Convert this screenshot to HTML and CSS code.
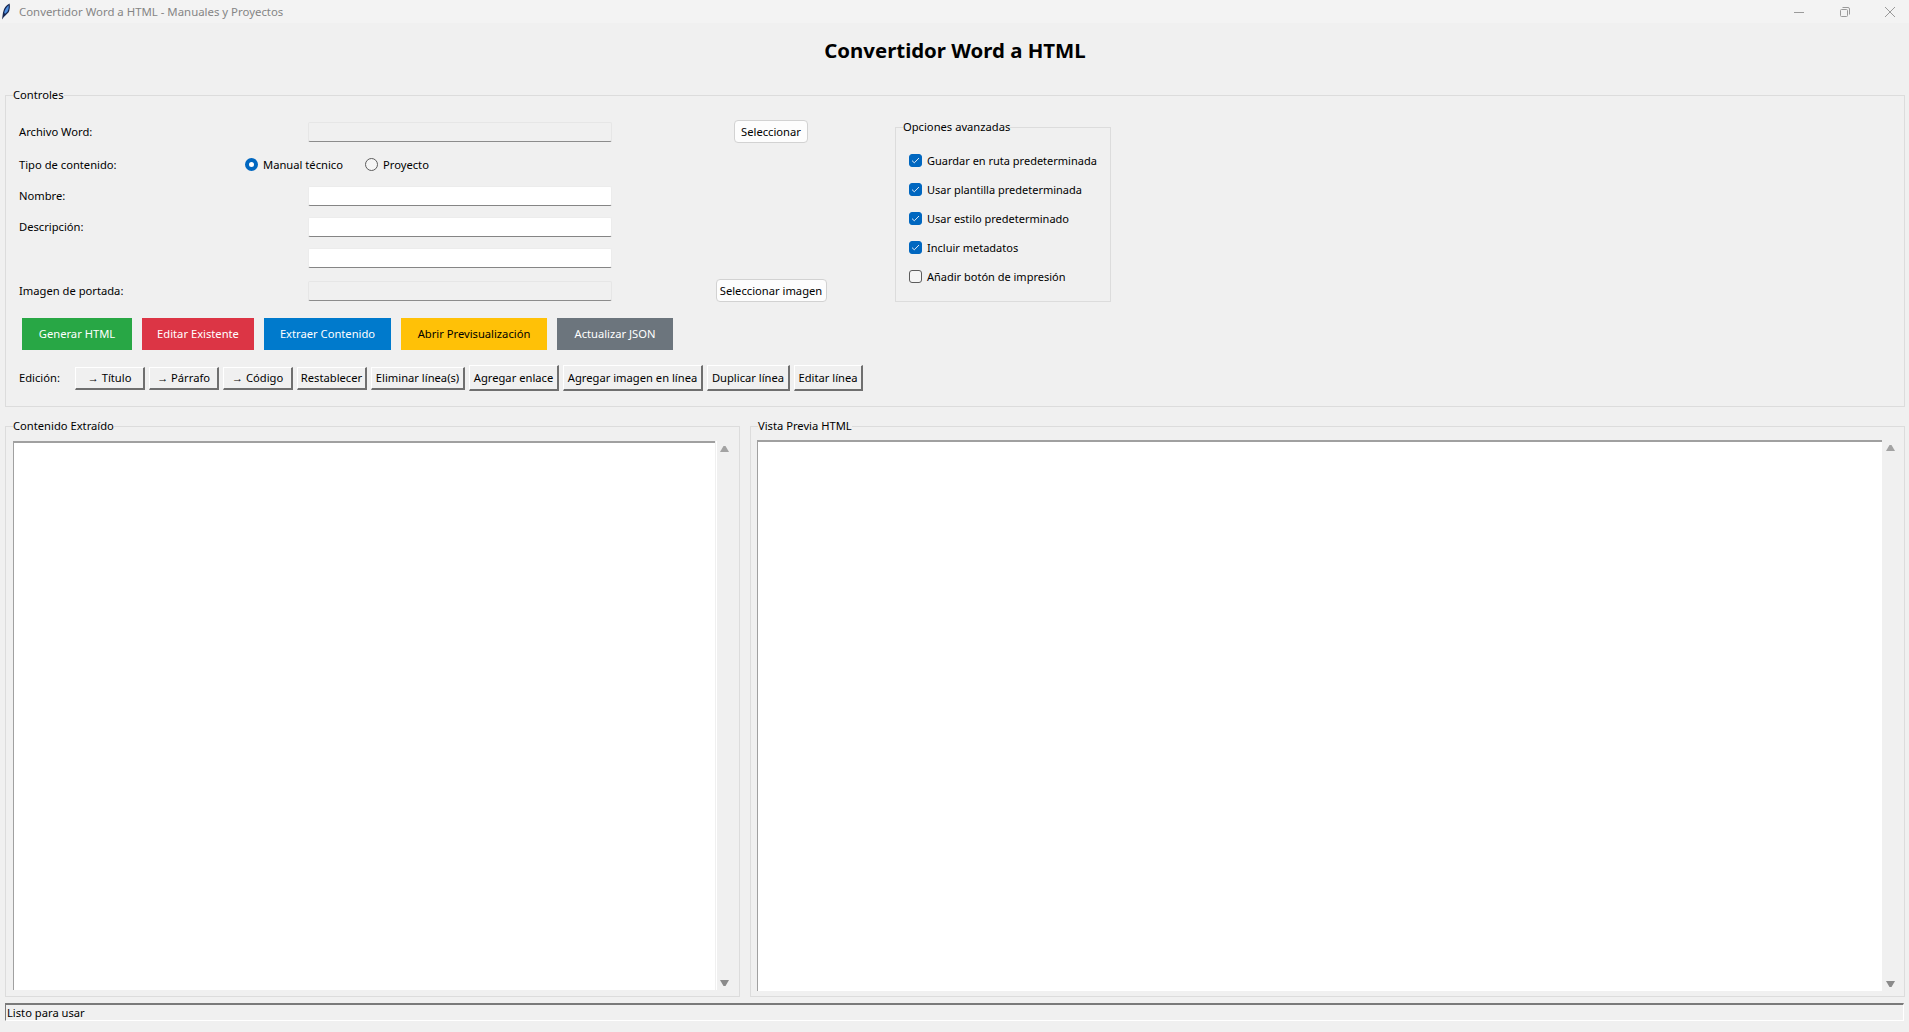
FILE: index.html
```html
<!DOCTYPE html>
<html lang="es">
<head>
<meta charset="utf-8">
<title>Convertidor Word a HTML - Manuales y Proyectos</title>
<link rel="stylesheet" href="styles.css">
</head>
<body>
<header class="titlebar">
  <svg class="feather" width="10" height="17" viewBox="0 0 10 17"><path d="M1 16.5L2 9.5Q3.2 3 8.6 .6Q9.6 6 7.4 9.6L4.4 12.4Q3 13.5 1 16.5Z" fill="#16264f"/><path d="M3.2 10Q4.2 4.6 7.8 2.2Q8 6 6.4 8.8L4.2 10.8Z" fill="#4f8fe0"/></svg>
  <span class="window-title">Convertidor Word a HTML - Manuales y Proyectos</span>
  <div class="window-controls">
    <svg width="10" height="10" viewBox="0 0 10 10"><path d="M0 5.5H10" stroke="#9a9a9a" fill="none"/></svg>
    <svg width="10" height="10" viewBox="0 0 10 10"><path d="M.5 3.5a1 1 0 0 1 1-1h5a1 1 0 0 1 1 1v5a1 1 0 0 1-1 1h-5a1 1 0 0 1-1-1zM2.5 .5h5.5a1.5 1.5 0 0 1 1.5 1.5v5.5" stroke="#9a9a9a" fill="none"/></svg>
    <svg width="10" height="10" viewBox="0 0 10 10"><path d="M0 0L10 10M10 0L0 10" stroke="#9a9a9a" fill="none"/></svg>
  </div>
</header>
<main class="app">
  <h1 class="heading">Convertidor Word a HTML</h1>
  <section class="group controls">
    <span class="legend">Controles</span>
    <div class="top-row">
      <div class="form-grid">
        <label class="field-label">Archivo Word:</label>
        <input class="entry entry-disabled col-entry" type="text" disabled>
        <div class="col-action"><button class="pick-btn pick-short">Seleccionar</button></div>

        <label class="field-label">Tipo de contenido:</label>
        <div class="radio-row">
          <span class="radio-item radio-item-first"><span class="radio radio-on"></span>Manual técnico</span>
          <span class="radio-item"><span class="radio"></span>Proyecto</span>
        </div>

        <label class="field-label">Nombre:</label>
        <input class="entry col-entry" type="text">

        <label class="field-label">Descripción:</label>
        <input class="entry col-entry" type="text">

        <input class="entry col-entry" type="text">

        <label class="field-label">Imagen de portada:</label>
        <input class="entry entry-disabled col-entry" type="text" disabled>
        <div class="col-action"><button class="pick-btn pick-long">Seleccionar imagen</button></div>
      </div>
      <section class="group options">
        <span class="legend">Opciones avanzadas</span>
        <div class="check-row"><span class="check check-on"><svg width="9" height="7" viewBox="0 0 9 7"><path d="M1 3.6L3.3 5.8L8 1" stroke="#dfeaf6" fill="none"/></svg></span>Guardar en ruta predeterminada</div>
        <div class="check-row"><span class="check check-on"><svg width="9" height="7" viewBox="0 0 9 7"><path d="M1 3.6L3.3 5.8L8 1" stroke="#dfeaf6" fill="none"/></svg></span>Usar plantilla predeterminada</div>
        <div class="check-row"><span class="check check-on"><svg width="9" height="7" viewBox="0 0 9 7"><path d="M1 3.6L3.3 5.8L8 1" stroke="#dfeaf6" fill="none"/></svg></span>Usar estilo predeterminado</div>
        <div class="check-row"><span class="check check-on"><svg width="9" height="7" viewBox="0 0 9 7"><path d="M1 3.6L3.3 5.8L8 1" stroke="#dfeaf6" fill="none"/></svg></span>Incluir metadatos</div>
        <div class="check-row"><span class="check"></span>Añadir botón de impresión</div>
      </section>
    </div>
    <div class="action-row">
      <button class="action action-green">Generar HTML</button>
      <button class="action action-red">Editar Existente</button>
      <button class="action action-blue">Extraer Contenido</button>
      <button class="action action-yellow">Abrir Previsualización</button>
      <button class="action action-gray">Actualizar JSON</button>
    </div>
    <div class="edit-row">
      <span class="edit-label">Edición:</span>
      <button class="tool tool-70">→ Título</button>
      <button class="tool tool-70">→ Párrafo</button>
      <button class="tool tool-70">→ Código</button>
      <button class="tool tool-70">Restablecer</button>
      <button class="tool tool-94">Eliminar línea(s)</button>
      <button class="tool tool-tall tool-90">Agregar enlace</button>
      <button class="tool tool-tall tool-140">Agregar imagen en línea</button>
      <button class="tool tool-tall tool-83">Duplicar línea</button>
      <button class="tool tool-tall tool-69">Editar línea</button>
    </div>
  </section>
  <div class="panes">
    <section class="group pane pane-left">
      <span class="legend">Contenido Extraído</span>
      <textarea class="text-box"></textarea>
      <div class="scroll-rail">
        <svg width="9" height="6" viewBox="0 0 9 6"><path d="M3.5 0h2L9 6H0Z" fill="#a3a3a3"/></svg>
        <svg width="9" height="6" viewBox="0 0 9 6"><path d="M0 0H9L5.5 6h-2Z" fill="#8a8a8a"/></svg>
      </div>
    </section>
    <section class="group pane pane-right">
      <span class="legend">Vista Previa HTML</span>
      <textarea class="text-box"></textarea>
      <div class="scroll-rail">
        <svg width="9" height="6" viewBox="0 0 9 6"><path d="M3.5 0h2L9 6H0Z" fill="#a3a3a3"/></svg>
        <svg width="9" height="6" viewBox="0 0 9 6"><path d="M0 0H9L5.5 6h-2Z" fill="#8a8a8a"/></svg>
      </div>
    </section>
  </div>
  <footer class="status">Listo para usar</footer>
</main>
</body>
</html>
```

FILE: styles.css
```css
* { box-sizing: border-box; }

html, body { height: 100%; }

body {
  margin: 0;
  display: flex;
  flex-direction: column;
  overflow: hidden;
  background: #f0f0f0;
  color: #000;
  font-family: "Noto Sans", "Open Sans", sans-serif;
  font-size: 11.2px;
}

/* Window title bar */
.titlebar {
  flex: none;
  height: 23px;
  display: flex;
  align-items: center;
  padding-left: 1px;
  background: #f3f3f3;
}
.feather { flex: none; margin-right: 8px; }
.window-title { color: #858585; font-size: 11.4px; }
.window-controls {
  margin-left: auto;
  display: flex;
  gap: 35.5px;
  padding-right: 14px;
}

/* Main */
.app {
  flex: 1;
  min-height: 0;
  display: flex;
  flex-direction: column;
  padding: 0 4px 11px 5px;
}
.heading {
  flex: none;
  height: 72px;
  margin: 0;
  padding-top: 13px;
  text-align: center;
  font-size: 20.4px;
  line-height: 28px;
  font-weight: 700;
}

.group {
  position: relative;
  border: 1px solid #dcdcdc;
}
.legend {
  position: absolute;
  left: 7px;
  top: -10px;
  line-height: 17px;
  background: #f0f0f0;
  white-space: nowrap;
}

/* Controls */
.controls {
  flex: none;
  height: 312px;
  padding: 26px 0 0 13px;
}
.top-row { display: flex; align-items: flex-start; }
.form-grid {
  width: 876px;
  display: grid;
  grid-template-columns: 226px 63px 304px 283px;
  grid-template-rows: 33px 31px 31px 31px 33px 20px;
  align-items: start;
}
.field-label {
  grid-column: 1;
  height: 20px;
  line-height: 20px;
}
.col-entry { grid-column: 3; }
.col-action {
  grid-column: 4;
  height: 19px;
  padding-left: 35px;
  display: flex;
  justify-content: center;
  align-items: center;
}
.entry {
  width: 304px;
  height: 20px;
  padding: 0 3px;
  background: #fff;
  border: 1px solid #ececec;
  border-bottom: 1px solid #858585;
  border-radius: 2px;
  outline: none;
}
.entry-disabled {
  background: #f0f0f0;
  border-color: #e6e6e6;
  border-bottom-color: #8c8c8c;
}
.pick-btn {
  flex: none;
  height: 23px;
  padding: 0;
  background: #fdfdfd;
  border: 1px solid #d2d2d2;
  border-radius: 4px;
  font: inherit;
  color: #000;
  white-space: nowrap;
}
.pick-short { width: 74px; }
.pick-long { width: 111px; }

.radio-row {
  grid-column: 2 / 5;
  height: 20px;
  display: flex;
  align-items: center;
}
.radio-item {
  display: flex;
  align-items: center;
  gap: 5px;
  line-height: 18px;
  padding-bottom: 1px;
}
.radio-item-first { width: 120px; }
.radio {
  flex: none;
  width: 13px;
  height: 13px;
  background: #f5f5f5;
  border: 1px solid #5c5c5c;
  border-radius: 50%;
}
.radio-on {
  background: #fff;
  border: 4px solid #0067c0;
}

.options {
  flex: none;
  width: 216px;
  height: 175px;
  margin-top: 5px;
  padding: 18px 0 0 13px;
}
.check-row {
  height: 29px;
  display: flex;
  align-items: center;
  gap: 5px;
  font-size: 11px;
  white-space: nowrap;
}
.check {
  flex: none;
  width: 13px;
  height: 13px;
  display: flex;
  align-items: center;
  justify-content: center;
  background: #f5f5f5;
  border: 1px solid #5c5c5c;
  border-radius: 3px;
}
.check-on { background: #0067c0; border-color: #0067c0; }

/* Action buttons */
.action-row {
  display: flex;
  gap: 10px;
  margin-top: 16px;
  padding-left: 3px;
}
.action {
  height: 32px;
  padding: 0 0 2px;
  border: 0;
  font: inherit;
  color: #fff;
}
.action-green { width: 110px; background: #28a745; }
.action-red { width: 112px; background: #dc3545; }
.action-blue { width: 127px; background: #007acc; }
.action-yellow { width: 146px; background: #ffc107; color: #000; }
.action-gray { width: 116px; background: #6c757d; }

/* Edit toolbar */
.edit-row {
  display: flex;
  align-items: center;
  gap: 4px;
  height: 26px;
  margin-top: 15px;
}
.edit-label { width: 52px; padding-bottom: 2px; }
.tool {
  height: 23px;
  padding: 0;
  background: #f0f0f0;
  border-style: solid;
  border-width: 1px 2px 2px 1px;
  border-color: #fff #6f6f6f #6f6f6f #fff;
  font: inherit;
  color: #000;
  white-space: nowrap;
}
.tool-tall { height: 26px; }
.tool-70 { width: 70px; }
.tool-94 { width: 94px; }
.tool-90 { width: 90px; }
.tool-140 { width: 140px; }
.tool-83 { width: 83px; }
.tool-69 { width: 69px; }

/* Lower panes */
.panes {
  flex: 1;
  min-height: 0;
  display: flex;
  gap: 10px;
  margin-top: 19px;
}
.pane { display: flex; }
.pane-left { width: 735px; padding: 14px 5px 6px 7px; }
.pane-right { flex: 1; padding: 13px 5px 5px 6px; }
.text-box {
  flex: 1;
  min-width: 0;
  margin: 0;
  padding: 2px;
  resize: none;
  outline: none;
  background: #fff;
  border-style: solid;
  border-width: 2px 0 0 1px;
  border-color: #a0a0a0;
  border-radius: 0;
  font: inherit;
}
.scroll-rail {
  flex: none;
  width: 17px;
  display: flex;
  flex-direction: column;
  align-items: center;
  justify-content: space-between;
  padding: 5px 0 4px;
}
.pane-left .scroll-rail {
  width: 19px;
  border-left: 1px solid #f0f0f0;
  box-shadow: inset 1px 0 #fff;
  padding-right: 1px;
}

/* Status bar */
.status {
  flex: none;
  width: 1899px;
  height: 18px;
  margin-top: 6px;
  padding-left: 1px;
  line-height: 15px;
  border-style: solid;
  border-width: 2px 1px 1px 1px;
  border-color: #7a7a7a #fff #fff #7a7a7a;
}
```
